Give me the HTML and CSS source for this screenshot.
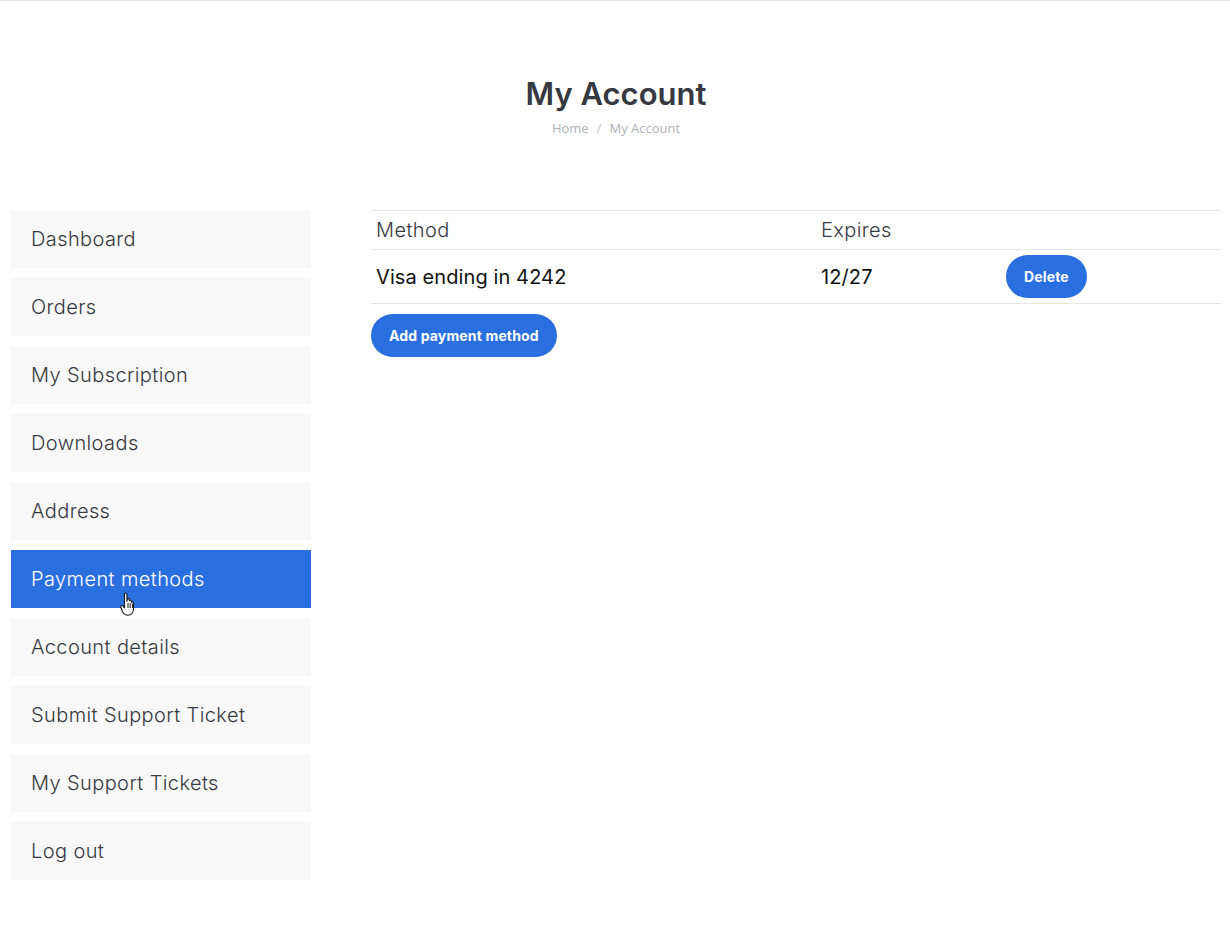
FILE: index.html
```html
<!DOCTYPE html>
<html lang="en">
<head>
<meta charset="utf-8">
<title>My Account</title>
<link rel="stylesheet" href="styles.css">
</head>
<body>
<header class="page-head">
  <h1 class="page-title">My Account</h1>
  <nav class="crumbs"><a>Home</a><span class="sep">/</span><a>My Account</a></nav>
</header>
<main class="account">
  <nav class="side">
    <a class="side-item">Dashboard</a>
    <a class="side-item">Orders</a>
    <a class="side-item">My Subscription</a>
    <a class="side-item">Downloads</a>
    <a class="side-item">Address</a>
    <a class="side-item active">Payment methods
      <svg class="cursor" width="18" height="25" viewBox="0 0 18 25"><path d="M4.500 2.200c0-1.600 2.400-1.600 2.400 0v7.200l.4-2c.4-1.200 2-1 2.100.2v1.400c.3-1.200 2-1 2.100.2v1.200c.4-1 1.900-.8 2 .4v5.800c0 3.800-2.200 6.600-5.600 6.600-3 0-4.300-1.500-5.400-3.500L.9 15.300c-.7-1.300 1-2.500 2.100-1.200l1.500 1.800z" fill="#fff" stroke="#1a1a1a" stroke-width="1.100" stroke-linejoin="round"/><path d="M8 11v5M10.200 11v5M12.400 11.500v4.500" stroke="#1a1a1a" stroke-width="1" fill="none"/></svg>
    </a>
    <a class="side-item">Account details</a>
    <a class="side-item">Submit Support Ticket</a>
    <a class="side-item">My Support Tickets</a>
    <a class="side-item">Log out</a>
  </nav>
  <section class="content">
    <table class="methods">
      <thead><tr><th class="col-method">Method</th><th class="col-exp">Expires</th><th></th></tr></thead>
      <tbody><tr><td>Visa ending in 4242</td><td>12/27</td><td class="col-act"><a class="btn">Delete</a></td></tr></tbody>
    </table>
    <a class="btn add">Add payment method</a>
  </section>
</main>
</body>
</html>
```
FILE: styles.css
```css
* { box-sizing: border-box; }
html, body { margin: 0; padding: 0; background: #fff; }
body { font-family: "Inter", "Liberation Sans", sans-serif; color: #363940; height: 925px; overflow: hidden; border-top: 1px solid #e6e6e6; }
.page-head { height: 209px; padding-top: 73px; text-align: center; margin-left: 2px; }
.page-title { margin: 0; font-family: "Inter", sans-serif; font-weight: 600; font-size: 31px; line-height: 40px; color: #363940; }
.crumbs { margin-top: 5px; font-family: "Open Sans", sans-serif; font-size: 13px; line-height: 18px; color: #aeb1b8; }
.sep { margin: 0 8px; color: #c4c6cb; }
.account { display: flex; gap: 60px; padding: 0 9px 0 11px; }
.side { width: 300px; flex: none; display: flex; flex-direction: column; gap: 10px; }
.side-item { position: relative; display: block; height: 58px; line-height: 58px; padding-left: 20px; background: #f8f8f8; font-size: 20px; font-weight: 300; letter-spacing: 0.4px; color: #363940; }
.side-item.active { background: #2a6fdf; color: #fff; }
.cursor { position: absolute; left: 109px; top: 42px; }
.content { flex: 1; }
.methods { width: 100%; border-collapse: collapse; table-layout: fixed; font-size: 20px; font-weight: 300; letter-spacing: 0.4px; }
.methods th, .methods td { padding: 0 5px; text-align: left; font-weight: 300; border-top: 1px solid #e6e6e6; border-bottom: 1px solid #e6e6e6; }
.methods th { height: 39px; color: #363940; }
.methods td { height: 54px; color: #111; font-weight: 400; letter-spacing: 0.1px; }
.methods .col-act { padding-left: 10px; }
.col-method { width: 445px; }
.col-exp { width: 180px; }
.btn { display: inline-block; height: 43px; line-height: 43px; padding: 0 18px; border-radius: 22px; background: #2a6fdf; color: #fff; font-size: 14px; font-weight: 700; letter-spacing: 0.15px; vertical-align: middle; }
.add { margin-top: 10px; }
```
